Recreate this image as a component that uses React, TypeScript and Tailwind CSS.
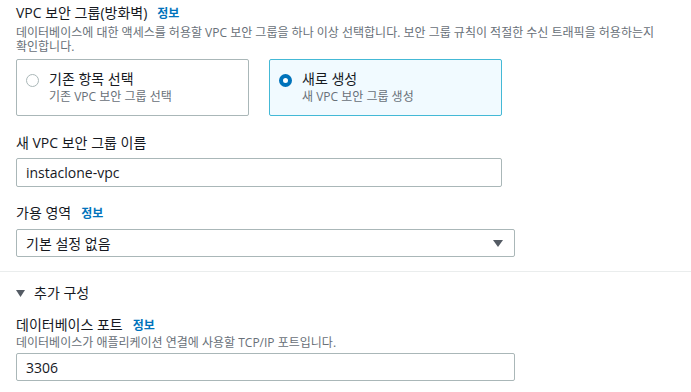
const font = { fontFamily: '"Open Sans", "Noto Sans CJK KR", sans-serif' };

function InfoLink() {
  return <span className="ml-[10px] text-[12px] font-bold text-[#0073bb]">정보</span>;
}

interface RadioCardProps {
  title: string;
  sub: string;
  checked: boolean;
}

function RadioCard({ title, sub, checked }: RadioCardProps) {
  const box = checked
    ? "border-[#44b9d6] bg-[#f1faff]"
    : "border-[#aab7b8] bg-white";
  return (
    <div className={`flex h-[57px] items-start gap-[10px] rounded-[2px] border px-[9px] pt-[9px] ${box}`}>
      {checked ? (
        <span className="mt-[5px] h-[13px] w-[13px] shrink-0 rounded-full border-[4px] border-[#0073bb] bg-white" />
      ) : (
        <span className="mt-[5px] h-[13px] w-[13px] shrink-0 rounded-full border border-[#aab7b8] bg-white" />
      )}
      <div className="flex flex-col">
        <span className="text-[14px] leading-[20px] text-[#16191f]">{title}</span>
        <span className="text-[12px] leading-[16px] text-[#687078]">{sub}</span>
      </div>
    </div>
  );
}

export default function App() {
  return (
    <div className="h-[392px] w-[691px] overflow-hidden bg-white" style={font}>
      <div className="px-4 pt-[3px]">
        <div className="text-[14px] leading-[20px] text-[#16191f]">
          VPC 보안 그룹(방화벽)
          <InfoLink />
        </div>
        <p className="mt-[2px] w-[648px] text-[12px] leading-[14px] text-[#687078]">
          데이터베이스에 대한 액세스를 허용할 VPC 보안 그룹을 하나 이상 선택합니다. 보안 그룹 규칙이 적절한 수신 트래픽을 허용하는지 확인합니다.
        </p>
        <div className="mt-[5px] grid w-[486px] grid-cols-2 gap-[20px]">
          <RadioCard title="기존 항목 선택" sub="기존 VPC 보안 그룹 선택" checked={false} />
          <RadioCard title="새로 생성" sub="새 VPC 보안 그룹 생성" checked={true} />
        </div>

        <div className="mt-[17px] text-[14px] leading-[20px] text-[#16191f]">새 VPC 보안 그룹 이름</div>
        <div className="mt-[5px] flex h-[29px] w-[486px] items-center rounded-[2px] border border-[#aab7b8] px-[9px] text-[14px] text-[#16191f]">
          instaclone-vpc
        </div>

        <div className="mt-[16px] text-[14px] leading-[20px] text-[#16191f]">
          가용 영역
          <InfoLink />
        </div>
        <div className="mt-[5px] flex h-[28px] w-[499px] items-center justify-between rounded-[2px] border border-[#aab7b8] pl-[9px] pr-[11px] text-[14px] text-[#16191f]">
          <span>기본 설정 없음</span>
          <svg width="10" height="7" viewBox="0 0 10 7">
            <path d="M0 0 H10 L5 7 Z" fill="#545b64" />
          </svg>
        </div>
      </div>

      <div className="mt-[14px] h-px w-full bg-[#eaeded]" />

      <div className="px-4">
        <div className="mt-[11px] flex items-center gap-[9px] text-[14px] leading-[20px] text-[#16191f]">
          <svg width="9" height="7" viewBox="0 0 9 7">
            <path d="M0 0 H9 L4.5 7 Z" fill="#545b64" />
          </svg>
          <span>추가 구성</span>
        </div>

        <div className="mt-[12px] text-[14px] leading-[20px] text-[#16191f]">
          데이터베이스 포트
          <InfoLink />
        </div>
        <p className="text-[12px] leading-[14px] text-[#687078]">
          데이터베이스가 애플리케이션 연결에 사용할 TCP/IP 포트입니다.
        </p>
        <div className="mt-[3px] flex h-[28px] w-[499px] items-center rounded-[2px] border border-[#aab7b8] px-[9px] text-[14px] text-[#16191f]">
          3306
        </div>
      </div>
    </div>
  );
}
